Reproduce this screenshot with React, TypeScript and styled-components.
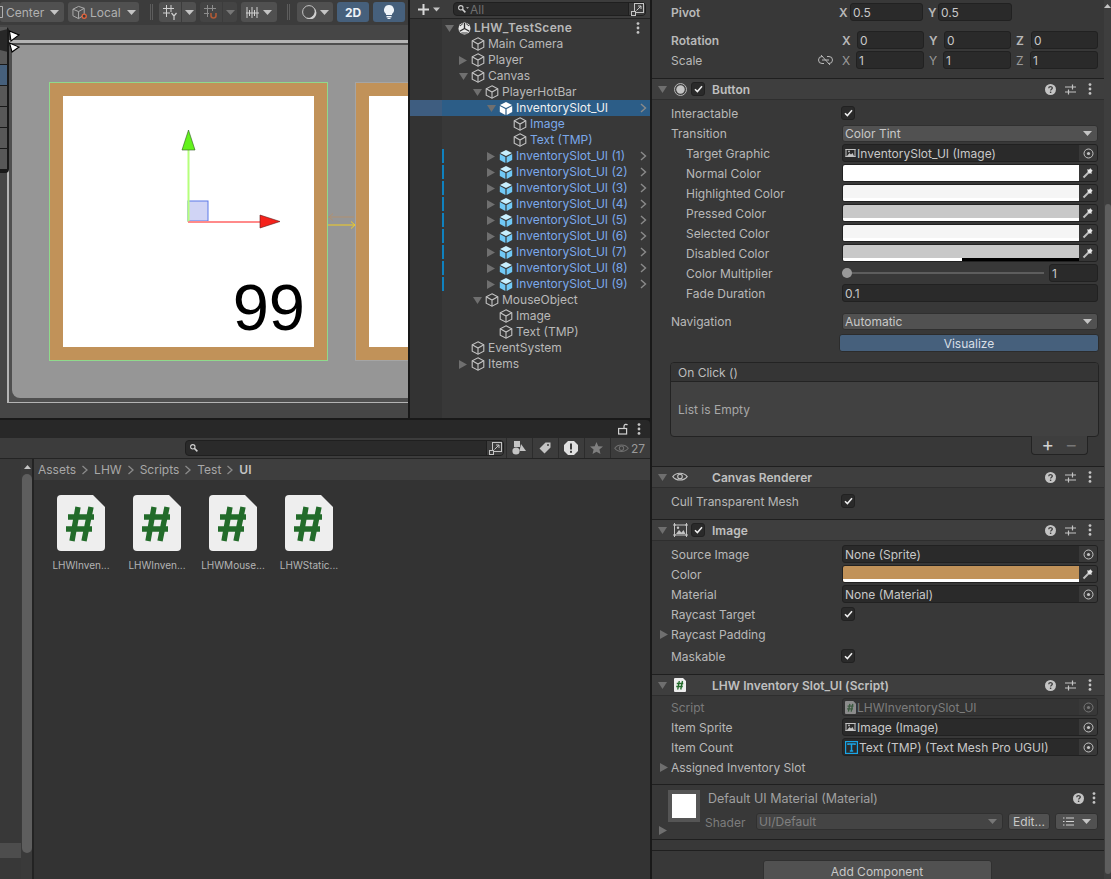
import React from 'react';
import styled, { createGlobalStyle } from 'styled-components';

const Global = createGlobalStyle`
  html, body { margin: 0; padding: 0; background: #191919; overflow: hidden; }
  #root { width: 1111px; height: 879px; }
  * { box-sizing: border-box; }
`;

const Root = styled.div`
  width: 1111px; height: 879px; display: flex; overflow: hidden;
  background: #191919; font-family: Inter, "Liberation Sans", sans-serif; font-size: 12px; color: #b8b8b8;
`;
const LeftColumn = styled.div`width: 650px; flex: none; display: flex; flex-direction: column;`;
const TopRow = styled.div`height: 418px; flex: none; display: flex;`;

/* ---------- Scene ---------- */
const Scene = styled.section`width: 408px; flex: none; display: flex; flex-direction: column; margin-right: 2px; overflow: hidden;`;
const SceneBar = styled.div`height: 25px; flex: none; background: #3c3c3c; display: flex; align-items: center; padding-bottom: 1px;`;
const ToolButton = styled.div<{ $w: number; $ml?: number; $blue?: boolean; $start?: number }>`
  width: ${p => p.$w}px; height: 20px; flex: none; margin-left: ${p => p.$ml ?? 4}px;
  display: flex; align-items: center; justify-content: ${p => (p.$start !== undefined ? 'flex-start' : 'center')}; gap: 3px;
  padding-left: ${p => p.$start ?? 0}px;
  background: ${p => (p.$blue ? '#46607c' : '#505050')}; border-radius: 3px; color: ${p => (p.$blue ? '#eef3f8' : '#b0b0b0')};
  font-size: 12px; font-weight: ${p => (p.$blue ? 700 : 400)};
`;
const CaretGap = styled.span<{ $w: number }>`margin-left: ${p => p.$w}px; display: flex; align-items: center;`;
const SplitPart = styled.div<{ $w: number; $dim?: boolean }>`
  width: ${p => p.$w}px; height: 20px; flex: none; display: flex; align-items: center; justify-content: center;
  background: ${p => (p.$dim ? '#444444' : '#505050')};
  margin-right: 1px; &:first-child { border-radius: 3px 0 0 3px; } &:last-child { border-radius: 0 3px 3px 0; margin-right: 0; }
`;
const Split = styled.div<{ $ml: number }>`display: flex; flex: none; margin-left: ${p => p.$ml}px;`;
const BarSep = styled.div<{ $ml: number }>`width: 3px; height: 16px; flex: none; margin-left: ${p => p.$ml}px; border-left: 1px solid #5d5d5d; border-right: 1px solid #5d5d5d;`;
const SceneArea = styled.div`flex: 1; position: relative; background: #464646; padding: 15px 0 15px 7px;`;
const Frame = styled.div`height: 363px; border-left: 2px solid #b4b4b4; border-top: 3px solid #b4b4b4; border-bottom: 1px solid #b4b4b4; background: #4f4f4f; padding: 2px 0 4px 3px;`;
const SceneCanvas = styled.div`position: relative; height: 100%; background: #969696; border-radius: 0 0 0 8px; overflow: hidden;`;
const Slot = styled.div<{ $left: number; $green?: boolean }>`
  position: absolute; left: ${p => p.$left}px; top: 37px; width: 279px; height: 279px;
  background: #c19259; border: 1px solid ${p => (p.$green ? '#8fd98c' : '#a5a5a5')}; padding: 13px; display: flex;
`;
const SlotInner = styled.div`flex: 1; background: #fff; display: flex; align-items: flex-end; justify-content: flex-end; padding: 0 9px 7px 0;`;
const Count = styled.span`font-family: "Liberation Sans", Arial, sans-serif; font-size: 65px; line-height: 64px; color: #000;`;
const GizmoSvg = styled.svg`position: absolute; left: 163px; top: 80px; width: 120px; height: 110px;`;
const LinkSvg = styled.svg`position: absolute; left: 316px; top: 167px; width: 28px; height: 18px;`;
const ToolOverlay = styled.div`position: absolute; left: -4px; top: 2px; width: 13px; height: 146px; background: #191919; border-radius: 0 4px 4px 0; padding: 0 2px 2px 0; display: flex; flex-direction: column; gap: 1px;`;
const ToolOverlayRow = styled.div<{ $active?: boolean; $h: number }>`height: ${p => p.$h}px; flex: none; background: ${p => (p.$active ? '#46607c' : '#585858')};`;
const CursorSvg = styled.svg`position: absolute; left: 0; top: 3px; width: 22px; height: 26px;`;

/* ---------- Hierarchy ---------- */
const Hierarchy = styled.section`width: 240px; flex: none; display: flex; flex-direction: column; overflow: hidden;`;
const HierBar = styled.div`height: 19px; flex: none; background: #3c3c3c; border-bottom: 1px solid #232323; display: flex; align-items: center; padding: 0 4px 0 7px;`;
const PlusWrap = styled.div`width: 36px; flex: none; display: flex; align-items: center; gap: 3px;`;
const SearchField = styled.div<{ $w?: number; $h?: number }>`
  flex: ${p => (p.$w ? 'none' : 1)}; width: ${p => (p.$w ? `${p.$w}px` : 'auto')}; height: ${p => p.$h ?? 14}px;
  background: #2a2a2a; border: 1px solid #1f1f1f; border-radius: 4px; display: flex; align-items: center; padding-left: 4px; color: #6f6f6f; font-size: 12px; gap: 1px;
`;
const SearchEnd = styled.div`margin-left: auto; width: 17px; height: 100%; background: #3c3c3c; border-left: 1px solid #1f1f1f; border-radius: 0 3px 3px 0; display: flex; align-items: center; justify-content: center;`;
const HierList = styled.div`flex: 1; padding-top: 1px; background: linear-gradient(90deg, #333333 32px, #383838 32px);`;
const HierRow = styled.div<{ $selected?: boolean }>`height: 16px; display: flex; align-items: center; background: ${p => (p.$selected ? '#2c5d87' : 'transparent')};`;
const RowGutter = styled.div<{ $selected?: boolean }>`width: 32px; height: 16px; flex: none; background: ${p => (p.$selected ? '#3e5d80' : 'transparent')};`;
const Mark = styled.div<{ $on?: boolean }>`width: 2px; height: 14px; flex: none; background: ${p => (p.$on ? '#0f81be' : 'transparent')};`;
const RowBody = styled.div<{ $depth: number }>`flex: 1; min-width: 0; height: 16px; display: flex; align-items: center; padding-left: ${p => p.$depth * 14}px; padding-right: 3px;`;
const ArrowSlot = styled.div`width: 10px; flex: none; display: flex; justify-content: center;`;
const NodeIcon = styled.div`width: 16px; margin: 0 2px; flex: none; display: flex; justify-content: center; align-items: center;`;
const NodeName = styled.span<{ $kind: string; $bold?: boolean }>`
  white-space: nowrap; line-height: 16px; font-weight: ${p => (p.$bold ? 600 : 400)}; letter-spacing: ${p => (p.$bold ? '.3px' : '0')};
  color: ${p => (p.$kind === 'selected' ? '#f0f0f0' : p.$kind === 'prefab' ? '#7ba8ea' : '#b8b8b8')};
`;
const RowEnd = styled.div<{ $pr?: number }>`margin-left: auto; margin-right: ${p => p.$pr ?? 0}px; width: 8px; flex: none; display: flex; justify-content: center;`;

/* ---------- Project ---------- */
const Project = styled.section`flex: 1; margin-top: 2px; display: flex; flex-direction: column; min-height: 0; overflow: hidden; border-radius: 0 4px 0 0;`;
const ProjectTabs = styled.div`height: 18px; flex: none; background: #282828; display: flex; align-items: center; justify-content: flex-end; gap: 9px; padding-right: 9px;`;
const ProjectBar = styled.div`height: 21px; flex: none; background: #3c3c3c; border-bottom: 1px solid #242424; display: flex; align-items: center; padding-left: 185px;`;
const FilterBtn = styled.div<{ $w: number; $first?: boolean }>`
  width: ${p => p.$w}px; height: 20px; flex: none; display: flex; align-items: center; justify-content: center; gap: 2px; padding-right: 2px;
  border-left: 1px solid #2c2c2c; color: #9a9a9a; font-size: 12px; margin-left: ${p => (p.$first ? 2 : 0)}px;
`;
const ProjectBody = styled.div`flex: 1; display: flex; min-height: 0; background: #333333;`;
const FolderPane = styled.div`width: 21px; flex: none; background: #383838; display: flex; flex-direction: column; justify-content: flex-end; padding-bottom: 21px;`;
const FolderSelected = styled.div`height: 15px; background: #4d4d4d;`;
const PaneScroll = styled.div`width: 13px; flex: none; background: #3a3a3a; border-right: 2px solid #232323; padding: 6px 0 0 1px; display: flex; flex-direction: column; align-items: center;`;
const PaneThumb = styled.div`width: 10px; height: 379px; margin-top: 5px; background: #5e5e5e; border-radius: 5px;`;
const AssetsPane = styled.div`flex: 1; display: flex; flex-direction: column; min-width: 0;`;
const Crumbs = styled.div`height: 21px; flex: none; background: #3e3e3e; display: flex; align-items: center; gap: 5px; padding-left: 4px; color: #a8a8a8;`;
const CrumbLast = styled.span`font-weight: 600; color: #c4c4c4;`;
const AssetGrid = styled.div`display: flex; padding: 15px 0 0 9px;`;
const Asset = styled.div`width: 76px; flex: none; display: flex; flex-direction: column; align-items: center;`;
const AssetLabel = styled.span`margin-top: 7px; font-size: 10px; line-height: 14px; color: #b4b4b4; white-space: nowrap;`;

/* ---------- Inspector ---------- */
const Inspector = styled.section`width: 459px; flex: none; margin-left: 2px; display: flex; background: #383838; overflow: hidden;`;
const InspectorContent = styled.div`width: 452px; flex: none; padding-top: 3px; display: flex; flex-direction: column;`;
const InspectorScroll = styled.div`width: 7px; flex: none; background: #3e3e3e; display: flex; flex-direction: column; align-items: center; padding-top: 4px;`;
const ScrollThumb = styled.div`width: 6px; height: 670px; margin-top: 196px; margin-left: 1px; background: #5e5e5e; border-radius: 3px;`;
const Row = styled.div<{ $mt?: number }>`height: 20px; flex: none; display: flex; align-items: center; padding: 0 6px 2px 19px; margin-top: ${p => p.$mt ?? 0}px;`;
const Label = styled.div<{ $indent?: boolean; $bold?: boolean; $dim?: boolean; $spread?: boolean }>`
  width: 171px; flex: none; display: flex; align-items: center; justify-content: ${p => (p.$spread ? 'space-between' : 'flex-start')};
  padding-left: ${p => (p.$indent ? 15 : 0)}px; padding-right: ${p => (p.$spread ? 9 : 0)}px; white-space: nowrap;
  font-weight: ${p => (p.$bold ? 600 : 400)}; color: ${p => (p.$dim ? '#7a7a7a' : '#b8b8b8')};
`;
const FoldArrow = styled.span`width: 11px; margin-left: -11px; flex: none; display: flex; align-items: center;`;
const Vec = styled.div<{ $w?: number; $ml?: number }>`flex: ${p => (p.$w ? 'none' : 1)}; width: ${p => (p.$w ? `${p.$w}px` : 'auto')}; margin-left: ${p => p.$ml ?? 0}px; display: flex; align-items: center; min-width: 0;`;
const VecRow = styled.div`flex: 1; display: flex; gap: 5px; min-width: 0;`;
const AxisLabel = styled.span<{ $w: number; $bold?: boolean; $dim?: boolean }>`
  width: ${p => p.$w}px; flex: none; text-align: left; font-weight: ${p => (p.$bold ? 600 : 400)}; color: ${p => (p.$dim ? '#9a9a9a' : '#b8b8b8')};
`;
const NumField = styled.div<{ $w?: number }>`
  flex: ${p => (p.$w ? 'none' : 1)}; width: ${p => (p.$w ? `${p.$w}px` : 'auto')}; min-width: 0; height: 18px; background: #2a2a2a; border: 1px solid #212121; border-radius: 3px;
  display: flex; align-items: center; padding-left: 2px; color: #c8c8c8;
`;
const CheckBox = styled.div`width: 14px; height: 14px; margin-left: -1px; flex: none; background: #2a2a2a; border: 1px solid #212121; border-radius: 3px; display: flex; align-items: center; justify-content: center;`;
const Dropdown = styled.div<{ $dim?: boolean; $w?: number }>`
  flex: ${p => (p.$w ? 'none' : 1)}; width: ${p => (p.$w ? `${p.$w}px` : 'auto')}; height: 17px; background: ${p => (p.$dim ? '#444444' : '#515151')};
  border: 1px solid #303030; border-radius: 3px; display: flex; align-items: center; justify-content: space-between;
  padding: 0 5px 0 2px; color: ${p => (p.$dim ? '#808080' : '#c8c8c8')};
`;
const ObjField = styled.div<{ $dim?: boolean }>`
  flex: 1; min-width: 0; height: 18px; background: ${p => (p.$dim ? '#343434' : '#2a2a2a')}; border: 1px solid ${p => (p.$dim ? '#2b2b2b' : '#212121')}; border-radius: 3px;
  display: flex; align-items: center; padding-left: 2px; gap: 1px; color: ${p => (p.$dim ? '#7c7c7c' : '#c8c8c8')}; white-space: nowrap; overflow: hidden;
`;
const ObjPicker = styled.div`margin-left: auto; width: 18px; height: 100%; flex: none; background: #383838; display: flex; align-items: center; justify-content: center;`;
const ColorField = styled.div`flex: 1; height: 18px; display: flex; background: #2a2a2a; border: 1px solid #212121; border-radius: 3px; overflow: hidden;`;
const ColorSwatch = styled.div<{ $c: string }>`flex: 1; background: ${p => p.$c}; display: flex; flex-direction: column; justify-content: flex-end;`;
const AlphaBar = styled.div<{ $half?: boolean }>`height: 3px; background: ${p => (p.$half ? 'linear-gradient(90deg, #fff 50.5%, #000 50.5%)' : '#fff')};`;
const Pipette = styled.div`width: 18px; flex: none; background: #363636; display: flex; align-items: center; justify-content: center;`;
const SliderWrap = styled.div`flex: 1; display: flex; align-items: center;`;
const SliderTrack = styled.div`width: 202px; height: 2px; flex: none; background: #5d5d5d; display: flex; align-items: center;`;
const SliderThumb = styled.div`width: 10px; height: 10px; flex: none; border-radius: 50%; background: #999999;`;
const VisualizeBtn = styled.div`height: 18px; width: 260px; flex: none; align-self: flex-end; margin: 2px 5px 0 0; background: #46607c; border: 1px solid #2c2c2c; border-radius: 3px; display: flex; align-items: center; justify-content: center; color: #d8dfe6;`;
const ListBox = styled.div`margin: 10px 5px 0 18px; height: 75px; flex: none; border: 1px solid #232323; border-radius: 4px; background: #414141; display: flex; flex-direction: column; overflow: hidden;`;
const ListHead = styled.div`height: 19px; flex: none; background: #353535; border-bottom: 1px solid #232323; display: flex; align-items: center; padding-left: 7px; color: #bdbdbd;`;
const ListEmpty = styled.div`flex: 1; display: flex; align-items: center; padding-left: 7px; color: #a8a8a8;`;
const ListTab = styled.div`align-self: flex-end; width: 57px; height: 19px; flex: none; margin: -1px 16px 11px 0; background: #3e3e3e; border: 1px solid #232323; border-top: none; border-radius: 0 0 4px 4px; display: flex; align-items: center; justify-content: space-around; padding: 0 4px; color: #d2d2d2; font-size: 19px; line-height: 18px;`;
const ListTabMinus = styled.span`color: #777777;`;
const Section = styled.div`flex: none; border-top: 1px solid #1f1f1f;`;
const SectionHead = styled.div`height: 21px; background: #3e3e3e; border-bottom: 1px solid #2e2e2e; display: flex; align-items: center; padding: 0 4px 0 6px;`;
const HeadIcon = styled.div`width: 20px; flex: none; margin: 0 2px 0 3px; display: flex; justify-content: center; align-items: center;`;
const HeadCheckSlot = styled.div`width: 14px; flex: none; margin-right: 6px; display: flex;`;
const HeadTitle = styled.div`font-weight: 600; color: #c0c0c0; white-space: nowrap; letter-spacing: .05px;`;
const HeadTools = styled.div`margin-left: auto; display: flex;`;
const HeadTool = styled.div`width: 20px; flex: none; display: flex; align-items: center; justify-content: center;`;
const SectionBody = styled.div<{ $pt: number; $pb: number }>`display: flex; flex-direction: column; padding: ${p => p.$pt}px 0 ${p => p.$pb}px;`;
const MaterialBlock = styled.div`height: 56px; flex: none; border-top: 1px solid #1f1f1f; border-bottom: 1px solid #1f1f1f; display: grid; grid-template-columns: 48px 1fr; padding: 5px 5px 0 7px;`;
const MatLeft = styled.div`position: relative; display: flex; flex-direction: column;`;
const MatSwatch = styled.div`width: 32px; height: 32px; margin-left: 9px; background: #555555; padding: 4px; display: flex;`;
const MatSwatchInner = styled.div`flex: 1; background: #fff;`;
const MatArrow = styled.div`margin-top: 1px; margin-left: 0;`;
const MatRight = styled.div`display: flex; flex-direction: column;`;
const MatTop = styled.div`height: 16px; display: flex; align-items: center; color: #a0a0a0; font-size: 12.5px; padding-left: 1px;`;
const MatTools = styled.div`margin-left: auto; display: flex; align-items: center; gap: 8px; padding-right: 3px;`;
const MatBottom = styled.div`margin-top: 7px; display: flex; align-items: center; height: 17px;`;
const ShaderLabel = styled.span`width: 51px; flex: none; color: #7d7d7d; margin-left: -2px; padding-top: 1px;`;
const SmallBtn = styled.div<{ $w: number; $ml: number }>`width: ${p => p.$w}px; margin-left: ${p => p.$ml}px; height: 17px; flex: none; background: #515151; border: 1px solid #303030; border-radius: 3px; display: flex; align-items: center; justify-content: center; gap: 8px; color: #c8c8c8;`;
const Spacer = styled.div<{ $h: number }>`height: ${p => p.$h}px; flex: none;`;
const BottomLine = styled.div`height: 1px; flex: none; background: #1f1f1f; margin-top: 10px;`;
const AddRow = styled.div`flex: none; display: flex; justify-content: center; padding: 9px 2px 0 0;`;
const AddBtn = styled.div`width: 229px; height: 26px; background: #515151; border: 1px solid #303030; border-radius: 3px; display: flex; justify-content: center; padding-top: 3px; color: #c8c8c8;`;

/* ---------- Icons ---------- */
const Caret = ({ c = '#c4c4c4', w = 9 }: { c?: string; w?: number }) => (
  <svg width={w} height={5} viewBox="0 0 9 5"><path d="M0 0H9L4.5 5Z" fill={c} /></svg>
);
const TriDown = () => <svg width="9" height="8" viewBox="0 0 9 8"><path d="M0 1H9L4.5 8Z" fill="#6f6f6f" /></svg>;
const TriRight = ({ c = '#6f6f6f' }: { c?: string }) => <svg width="8" height="9" viewBox="0 0 8 9"><path d="M0 0L8 4.5L0 9Z" fill={c} /></svg>;
const Chevron = () => <svg width="7" height="10" viewBox="0 0 7 10"><path d="M1 1L5.5 5L1 9" fill="none" stroke="#8a8a8a" strokeWidth="1.4" /></svg>;
const CubeOutline = ({ s = 14 }: { s?: number }) => (
  <svg width={s} height={s} viewBox="0 0 14 14" fill="none" stroke="#c4c4c4" strokeWidth="1.1">
    <path d="M7 .8L12.8 3.8V10.2L7 13.2L1.2 10.2V3.8Z" /><path d="M1.2 3.8L7 7L12.8 3.8M7 7V13.2" />
  </svg>
);
const CubeSolid = ({ sel }: { sel?: boolean }) => (
  <svg width="14" height="15" viewBox="0 0 14 14">
    <path d="M7 .5L13 3.6L7 6.6L1 3.6Z" fill={sel ? '#ffffff' : '#c8effe'} />
    <path d="M.8 4.6L6.4 7.5V13.6L.8 10.6Z" fill={sel ? '#ffffff' : '#71c9f6'} />
    <path d="M13.2 4.6L7.6 7.5V13.6L13.2 10.6Z" fill={sel ? '#ffffff' : '#71c9f6'} />
  </svg>
);
const UnityMark = () => (
  <svg width="13" height="13" viewBox="0 0 13 13">
    <circle cx="6.5" cy="6.5" r="6" fill="#e6e6e6" />
    <path d="M6.5 6.5V1M6.5 6.5L1.7 9.3M6.5 6.5L11.3 9.3" stroke="#2b2b2b" strokeWidth="1.3" />
    <path d="M2 4L5 1.5M8 1.5L11 4M3.3 11L9.7 11" stroke="#2b2b2b" strokeWidth=".9" />
  </svg>
);
const Magnifier = ({ caret }: { caret?: boolean }) => (
  <svg width={caret ? 11 : 8} height="8" viewBox={caret ? '0 0 11 8' : '0 0 8 8'} fill="none" stroke="#cfcfcf" strokeWidth="1.1">
    <circle cx="2.8" cy="2.8" r="2.2" /><path d="M4.400 4.400L7.400 7.400" strokeWidth="1.5" />
    {caret && <path d="M8 2H11L9.500 4Z" fill="#9a9a9a" stroke="none" />}
  </svg>
);
const OpenFull = () => (
  <svg width="13" height="13" viewBox="0 0 13 13" fill="none" stroke="#c4c4c4" strokeWidth="1">
    <rect x="3.5" y=".5" width="9" height="9" /><rect x=".5" y="8.5" width="4" height="4" fill="#3c3c3c" /><path d="M5.5 7.5L10 3M7 3H10V6" />
  </svg>
);
const Dots = ({ c = '#c4c4c4' }: { c?: string }) => (
  <svg width="4" height="12" viewBox="0 0 4 12" fill={c}><circle cx="2" cy="1.6" r="1.4" /><circle cx="2" cy="6" r="1.4" /><circle cx="2" cy="10.4" r="1.4" /></svg>
);
const Help = () => (
  <svg width="11" height="11" viewBox="0 0 11 11">
    <circle cx="5.5" cy="5.5" r="5.5" fill="#c4c4c4" />
    <path d="M3.7 4.2C3.8 2.2 7.3 2.2 7.3 4.1C7.3 5.3 5.6 5.3 5.6 6.6" fill="none" stroke="#3e3e3e" strokeWidth="1.3" />
    <rect x="4.9" y="7.6" width="1.4" height="1.4" fill="#3e3e3e" />
  </svg>
);
const Presets = () => (
  <svg width="11" height="11" viewBox="0 0 11 11" stroke="#c4c4c4" strokeWidth="1.2" fill="none">
    <path d="M0 3H11M0 8H11M7.5 .5V5.5M3.5 5.5V10.5" />
  </svg>
);
const Tick = () => <svg width="9" height="8" viewBox="0 0 9 8"><path d="M1 4.2L3.4 6.6L8 1.2" fill="none" stroke="#f0f0f0" strokeWidth="1.5" /></svg>;
const Target = ({ dim }: { dim?: boolean }) => (
  <svg width="11" height="11" viewBox="0 0 11 11" fill="none" stroke={dim ? '#777777' : '#c4c4c4'}><circle cx="5.5" cy="5.5" r="4.5" /><circle cx="5.5" cy="5.5" r="1.6" fill={dim ? '#777777' : '#c4c4c4'} stroke="none" /></svg>
);
const Dropper = () => (
  <svg width="12" height="12" viewBox="0 0 12 12" fill="none">
    <path d="M1.500 10.500L7 5" stroke="#bfbfbf" strokeWidth="2" />
    <path d="M6.500 5.500L9.500 2.500" stroke="#e8e8e8" strokeWidth="3.200" />
    <path d="M5.500 2.500L9.500 6.500" stroke="#e8e8e8" strokeWidth="1.200" />
  </svg>
);
const ImageGlyph = ({ c = '#c4c4c4' }: { c?: string }) => (
  <svg width="11" height="10" viewBox="0 0 11 10" fill="none" stroke={c}><rect x="1" y="1.5" width="9" height="7" /><path d="M.5 1.5H2M9 1.5H10.5M.5 8.5H2M9 8.5H10.5" /><path d="M2 8L4.5 5L6 6.5L7.5 5L9 8Z" fill={c} stroke="none" /><circle cx="4" cy="3.4" r=".9" fill={c} stroke="none" /></svg>
);
const ImageHeadIcon = () => (
  <svg width="15" height="14" viewBox="0 0 15 14" fill="none" stroke="#c4c4c4"><rect x="1.5" y="2" width="12" height="10" /><path d="M0 2H3M12 2H15M0 12H3M12 12H15M1.5 0V3M13.5 0V3M1.5 11V14M13.5 11V14" /><path d="M3 11L6 7L8.5 9.5L10.5 7L12.5 11Z" fill="#c4c4c4" stroke="none" /><circle cx="5" cy="4.8" r="1.2" fill="#c4c4c4" stroke="none" /></svg>
);
const ButtonHeadIcon = () => (
  <svg width="13" height="13" viewBox="0 0 13 13"><circle cx="6.5" cy="6.5" r="6" fill="none" stroke="#b4b4b4" /><circle cx="6.5" cy="6.5" r="4.2" fill="#c4c4c4" /></svg>
);
const EyeIcon = ({ c = '#c4c4c4', s = 16 }: { c?: string; s?: number }) => (
  <svg width={s} height={s * 0.7} viewBox="0 0 16 11" fill="none" stroke={c} strokeWidth="1.1"><path d="M.8 5.5C4 1 12 1 15.2 5.5C12 10 4 10 .8 5.5Z" /><circle cx="8" cy="5.5" r="2.3" /></svg>
);
const ScriptIcon = ({ w, h }: { w: number; h: number }) => (
  <svg width={w} height={h} viewBox="0 0 48 56">
    <path d="M4 0H36L48 12V52Q48 56 44 56H4Q0 56 0 52V4Q0 0 4 0Z" fill="#eeeeee" />
    <path d="M21 12L15 46M34 12L27 46M11 22H37M9 34H35" stroke="#226b2a" strokeWidth="5.4" fill="none" />
  </svg>
);
const TmpIcon = () => (
  <svg width="13" height="13" viewBox="0 0 13 13" fill="none" stroke="#19a5e6" strokeWidth="1.2">
    <rect x=".6" y=".6" width="11.8" height="11.8" /><path d="M3 4V3H10V4M6.5 3V10M4.8 10H8.2" strokeWidth="1.5" />
  </svg>
);
const LinkBroken = () => (
  <svg width="15" height="10" viewBox="0 0 15 10" fill="none" stroke="#b8b8b8" strokeWidth="1"><path d="M5 1.5H4A3.5 3.5 0 0 0 4 8.5H6M9 1.5H11A3.5 3.5 0 0 1 11 8.5H10" /><path d="M4 5H11M3 0L12 10" /></svg>
);

const HotbarNames = [1, 2, 3, 4, 5, 6, 7, 8, 9];
type Node = { name: string; depth: number; arrow?: 'down' | 'right'; icon: 'plain' | 'solid' | 'scene'; kind: string; mark?: boolean; chevron?: boolean; selected?: boolean; bold?: boolean };
const nodes: Node[] = [
  { name: 'LHW_TestScene', depth: 0, arrow: 'down', icon: 'scene', kind: 'plain', bold: true },
  { name: 'Main Camera', depth: 1, icon: 'plain', kind: 'plain' },
  { name: 'Player', depth: 1, arrow: 'right', icon: 'plain', kind: 'plain' },
  { name: 'Canvas', depth: 1, arrow: 'down', icon: 'plain', kind: 'plain' },
  { name: 'PlayerHotBar', depth: 2, arrow: 'down', icon: 'plain', kind: 'plain' },
  { name: 'InventorySlot_UI', depth: 3, arrow: 'down', icon: 'solid', kind: 'selected', chevron: true, selected: true },
  { name: 'Image', depth: 4, icon: 'plain', kind: 'prefab' },
  { name: 'Text (TMP)', depth: 4, icon: 'plain', kind: 'prefab' },
  ...HotbarNames.map(n => ({ name: `InventorySlot_UI (${n})`, depth: 3, arrow: 'right' as const, icon: 'solid' as const, kind: 'prefab', mark: true, chevron: true })),
  { name: 'MouseObject', depth: 2, arrow: 'down', icon: 'plain', kind: 'plain' },
  { name: 'Image', depth: 3, icon: 'plain', kind: 'plain' },
  { name: 'Text (TMP)', depth: 3, icon: 'plain', kind: 'plain' },
  { name: 'EventSystem', depth: 1, icon: 'plain', kind: 'plain' },
  { name: 'Items', depth: 1, arrow: 'right', icon: 'plain', kind: 'plain' },
];

const Check = () => <CheckBox><Tick /></CheckBox>;

const SectionHeader = ({ icon, title, check }: { icon: React.ReactNode; title: string; check?: boolean }) => (
  <SectionHead>
    <TriDown />
    <HeadIcon>{icon}</HeadIcon>
    <HeadCheckSlot>{check && <Check />}</HeadCheckSlot>
    <HeadTitle>{title}</HeadTitle>
    <HeadTools>
      <HeadTool><Help /></HeadTool>
      <HeadTool><Presets /></HeadTool>
      <HeadTool><Dots /></HeadTool>
    </HeadTools>
  </SectionHead>
);

const ObjectRow = ({ label, value, icon, dim, indent }: { label: string; value: string; icon?: React.ReactNode; dim?: boolean; indent?: boolean }) => (
  <Row>
    <Label $indent={indent} $dim={dim}>{label}</Label>
    <ObjField $dim={dim}>{icon}<span>{value}</span><ObjPicker><Target dim={dim} /></ObjPicker></ObjField>
  </Row>
);

const ColorRow = ({ label, color, half, indent }: { label: string; color: string; half?: boolean; indent?: boolean }) => (
  <Row>
    <Label $indent={indent}>{label}</Label>
    <ColorField>
      <ColorSwatch $c={color}><AlphaBar $half={half} /></ColorSwatch>
      <Pipette><Dropper /></Pipette>
    </ColorField>
  </Row>
);

const CrumbChevron = () => (
  <svg width="8" height="10" viewBox="0 0 8 10"><path d="M1.500 1L6 5L1.500 9" fill="none" stroke="#8a8a8a" strokeWidth="1.3" /></svg>
);
const ScriptIconDim = () => (
  <svg width="11" height="13" viewBox="0 0 48 56"><path d="M4 0H36L48 12V52Q48 56 44 56H4Q0 56 0 52V4Q0 0 4 0Z" fill="#8c8c8c" /><path d="M21 12L15 46M34 12L27 46M11 22H37M9 34H35" stroke="#3c5a40" strokeWidth="6" fill="none" /></svg>
);

export default function App() {
  return (
    <Root>
      <Global />
      <LeftColumn>
        <TopRow>
          <Scene>
            <SceneBar>
              <ToolButton $w={64} $ml={0} $start={0}>
                <svg width="3" height="12" viewBox="0 0 3 12" fill="none" stroke="#b0b0b0"><path d="M0 .5H2.500V11.500H0" /></svg>
                <span>Center</span><CaretGap $w={3}><Caret /></CaretGap>
              </ToolButton>
              <ToolButton $w={71} $start={4}>
                <svg width="15" height="15" viewBox="0 0 16 15" fill="none" stroke="#b0b0b0"><path d="M7 1L13 3V10L7 14L1 11V4Z" /><path d="M1 4L7 6.5L13 3M7 6.5V14" /><circle cx="13" cy="11.5" r="2.2" fill="#3c3c3c" stroke="#e2623a" strokeWidth="1.4" /></svg>
                <span>Local</span><CaretGap $w={3}><Caret /></CaretGap>
              </ToolButton>
              <BarSep $ml={11} />
              <Split $ml={6}>
                <SplitPart $w={22}><svg width="14" height="15" viewBox="0 0 14 15" fill="none" stroke="#d0d0d0"><path d="M3.5 0V12M8 0V7M0 3.5H11M0 8H7" /><path d="M8.5 8L11 11L13.5 8M11 11V15" strokeWidth="1.2" /></svg></SplitPart>
                <SplitPart $w={14}><Caret /></SplitPart>
              </Split>
              <Split $ml={4}>
                <SplitPart $w={22} $dim><svg width="14" height="14" viewBox="0 0 14 14" fill="none"><path d="M3.500 0V12M8.500 0V6M0 3.500H12M0 8.500H5" stroke="#8c8c8c" /><path d="M7 8V10.5A2.5 2.5 0 0 0 12 10.5V8" stroke="#b05a36" strokeWidth="1.6" /></svg></SplitPart>
                <SplitPart $w={14} $dim><Caret c="#777777" /></SplitPart>
              </Split>
              <ToolButton $w={36}>
                <svg width="14" height="13" viewBox="0 0 14 13" fill="none" stroke="#d0d0d0"><path d="M1 1V12M3.5 4V10M6 1V12M8.5 4V10M11 1V12M0 7H13" /></svg>
                <Caret />
              </ToolButton>
              <BarSep $ml={10} />
              <ToolButton $w={36} $ml={7}>
                <svg width="15" height="14" viewBox="0 0 15 14"><circle cx="7" cy="7" r="6.4" fill="#4a4a4a" stroke="#c4c4c4" /><path d="M12 3A6 6 0 0 1 4 13A7 7 0 0 0 12 3Z" fill="#d0d0d0" /></svg>
                <Caret />
              </ToolButton>
              <ToolButton $w={32} $blue>2D</ToolButton>
              <ToolButton $w={32} $blue>
                <svg width="10" height="14" viewBox="0 0 10 14" fill="#eef3f8"><path d="M5 0A5 5 0 0 1 8 9V10H2V9A5 5 0 0 1 5 0Z" /><rect x="2.5" y="11" width="5" height="1.4" /><rect x="3.5" y="12.8" width="3" height="1.2" /></svg>
              </ToolButton>
            </SceneBar>
            <SceneArea>
              <Frame>
                <SceneCanvas>
                  <Slot $left={37} $green>
                    <SlotInner><Count>99</Count></SlotInner>
                  </Slot>
                  <Slot $left={343}>
                    <SlotInner />
                  </Slot>
                  <LinkSvg viewBox="0 0 28 18" fill="none">
                    <path d="M0 5H26M5 1.5L1 5L5 8.5" stroke="#b09070" strokeWidth="1" />
                    <path d="M0 13H27M23 9.5L27 13L23 16.5" stroke="#f2cd22" strokeWidth="1" />
                  </LinkSvg>
                  <GizmoSvg viewBox="175 125 120 110">
                    <rect x="188" y="201" width="20" height="20" fill="#d0d4f5" stroke="#5b78e8" strokeWidth="1" />
                    <rect x="187.5" y="148" width="2" height="74" fill="#b6ff7c" />
                    <rect x="188" y="221" width="74" height="2" fill="#ff8a8a" />
                    <path d="M188.500 130L182 150H195Z" fill="#63f21c" stroke="#2f5a22" strokeWidth=".6" />
                    <path d="M280 221.500L260 215V228Z" fill="#f5221b" stroke="#5e1a18" strokeWidth=".6" />
                  </GizmoSvg>
                </SceneCanvas>
              </Frame>
              <ToolOverlay>
                <ToolOverlayRow $h={37} />
                <ToolOverlayRow $h={20} $active />
                <ToolOverlayRow $h={20} />
                <ToolOverlayRow $h={20} />
                <ToolOverlayRow $h={20} />
                <ToolOverlayRow $h={20} />
              </ToolOverlay>
              <CursorSvg viewBox="0 0 22 26">
                <path d="M0 3L8 1L7 8L9 13L7 18L8 24L0 22Z" fill="#1c1c1c" opacity=".8" />
                <path d="M9.500 3L19 7L11 13Z" fill="#fff" stroke="#000" strokeWidth="1.100" />
                <path d="M9.500 15L19 19L12 24Z" fill="#fff" stroke="#000" strokeWidth="1.100" />
              </CursorSvg>
            </SceneArea>
          </Scene>
          <Hierarchy>
            <HierBar>
              <PlusWrap>
                <svg width="13" height="13" viewBox="0 0 13 13"><path d="M6.5 1V12M1 6.500H12" stroke="#d8d8d8" strokeWidth="2" /></svg>
                <Caret w={7} />
              </PlusWrap>
              <SearchField>
                <Magnifier caret />
                <span>All</span>
                <SearchEnd><OpenFull /></SearchEnd>
              </SearchField>
            </HierBar>
            <HierList>
              {nodes.map((n, i) => (
                <HierRow key={i} $selected={n.selected}>
                  <RowGutter $selected={n.selected} />
                  <Mark $on={n.mark} />
                  <RowBody $depth={n.depth}>
                    <ArrowSlot>{n.arrow === 'down' ? <TriDown /> : n.arrow === 'right' ? <TriRight /> : null}</ArrowSlot>
                    <NodeIcon>
                      {n.icon === 'scene' ? <UnityMark /> : n.icon === 'solid' ? <CubeSolid sel={n.selected} /> : <CubeOutline />}
                    </NodeIcon>
                    <NodeName $kind={n.kind} $bold={n.bold}>{n.name}</NodeName>
                    {n.chevron && <RowEnd><Chevron /></RowEnd>}
                    {n.bold && <RowEnd $pr={5}><Dots /></RowEnd>}
                  </RowBody>
                </HierRow>
              ))}
            </HierList>
          </Hierarchy>
        </TopRow>
        <Project>
          <ProjectTabs>
            <svg width="10" height="12" viewBox="0 0 10 12" fill="none" stroke="#d0d0d0" strokeWidth="1.2"><rect x=".6" y="5.500" width="8" height="5.500" /><path d="M6 5.500V3A2 2 0 0 1 9.500 2" /></svg>
            <Dots />
          </ProjectTabs>
          <ProjectBar>
            <SearchField $w={319} $h={16}>
              <Magnifier />
              <SearchEnd><OpenFull /></SearchEnd>
            </SearchField>
            <FilterBtn $w={26} $first>
              <svg width="14" height="14" viewBox="0 0 14 14" fill="#c4c4c4"><rect x="2" y="0" width="6" height="6" /><circle cx="4" cy="10" r="3.6" /><path d="M9 3L14 10H7.500Z" /></svg>
            </FilterBtn>
            <FilterBtn $w={26}>
              <svg width="12" height="12" viewBox="0 0 12 12"><path d="M6.500 0.500H11.500V5.500L5.500 11.500L.5 6.500Z" fill="#c4c4c4" /><circle cx="9" cy="3" r="1" fill="#3c3c3c" /></svg>
            </FilterBtn>
            <FilterBtn $w={26}>
              <svg width="14" height="14" viewBox="0 0 14 14"><path d="M4 0H10L14 4V10L10 14H4L0 10V4Z" fill="#e0e0e0" /><rect x="6" y="2.500" width="2" height="6" fill="#3c3c3c" /><rect x="6" y="9.800" width="2" height="2" fill="#3c3c3c" /></svg>
            </FilterBtn>
            <FilterBtn $w={26}>
              <svg width="13" height="12" viewBox="0 0 13 12"><path d="M6.500 0L8.300 4.200L13 4.600L9.400 7.600L10.500 12L6.500 9.700L2.500 12L3.600 7.600L0 4.600L4.700 4.200Z" fill="#7f7f7f" /></svg>
            </FilterBtn>
            <FilterBtn $w={40}>
              <EyeIcon c="#6f6f6f" s={15} />
              <span>27</span>
            </FilterBtn>
          </ProjectBar>
          <ProjectBody>
            <FolderPane><FolderSelected /></FolderPane>
            <PaneScroll>
              <svg width="7" height="4" viewBox="0 0 7 4"><path d="M0 4L3.500 0L7 4Z" fill="#c4c4c4" /></svg>
              <PaneThumb />
            </PaneScroll>
            <AssetsPane>
              <Crumbs>
                <span>Assets</span><CrumbChevron />
                <span>LHW</span><CrumbChevron />
                <span>Scripts</span><CrumbChevron />
                <span>Test</span><CrumbChevron />
                <CrumbLast>UI</CrumbLast>
              </Crumbs>
              <AssetGrid>
                {['LHWInven...', 'LHWInven...', 'LHWMouse...', 'LHWStatic...'].map((l, i) => (
                  <Asset key={i}>
                    <ScriptIcon w={48} h={56} />
                    <AssetLabel>{l}</AssetLabel>
                  </Asset>
                ))}
              </AssetGrid>
            </AssetsPane>
          </ProjectBody>
        </Project>
      </LeftColumn>
      <Inspector>
        <InspectorContent>
          <Row>
            <Label $bold>Pivot</Label>
            <VecRow>
              <Vec $w={84} $ml={-3}><AxisLabel $w={11} $bold>X</AxisLabel><NumField>0.5</NumField></Vec>
              <Vec $w={84}><AxisLabel $w={10} $bold>Y</AxisLabel><NumField>0.5</NumField></Vec>
            </VecRow>
          </Row>
          <Row $mt={8}>
            <Label $bold>Rotation</Label>
            <VecRow>
              {['X', 'Y', 'Z'].map(a => <Vec key={a}><AxisLabel $w={15} $bold>{a}</AxisLabel><NumField>0</NumField></Vec>)}
            </VecRow>
          </Row>
          <Row>
            <Label $spread>Scale<LinkBroken /></Label>
            <VecRow>
              {['X', 'Y', 'Z'].map(a => <Vec key={a}><AxisLabel $w={14} $dim>{a}</AxisLabel><NumField>1</NumField></Vec>)}
            </VecRow>
          </Row>
          <Spacer $h={7} />
          <Section>
            <SectionHeader icon={<ButtonHeadIcon />} title="Button" check />
            <SectionBody $pt={4} $pb={0}>
              <Row><Label>Interactable</Label><Check /></Row>
              <Row><Label>Transition</Label><Dropdown>Color Tint<Caret /></Dropdown></Row>
              <ObjectRow label="Target Graphic" value="InventorySlot_UI (Image)" icon={<ImageGlyph />} indent />
              <ColorRow label="Normal Color" color="#ffffff" indent />
              <ColorRow label="Highlighted Color" color="#f5f5f5" indent />
              <ColorRow label="Pressed Color" color="#c8c8c8" indent />
              <ColorRow label="Selected Color" color="#f5f5f5" indent />
              <ColorRow label="Disabled Color" color="#c8c8c8" half indent />
              <Row>
                <Label $indent>Color Multiplier</Label>
                <SliderWrap><SliderTrack><SliderThumb /></SliderTrack></SliderWrap>
                <NumField $w={49}>1</NumField>
              </Row>
              <Row><Label $indent>Fade Duration</Label><NumField>0.1</NumField></Row>
              <Row $mt={8}><Label>Navigation</Label><Dropdown>Automatic<Caret /></Dropdown></Row>
              <VisualizeBtn>Visualize</VisualizeBtn>
              <ListBox>
                <ListHead>On Click ()</ListHead>
                <ListEmpty>List is Empty</ListEmpty>
              </ListBox>
              <ListTab><span>+</span><ListTabMinus>−</ListTabMinus></ListTab>
            </SectionBody>
          </Section>
          <Section>
            <SectionHeader icon={<EyeIcon />} title="Canvas Renderer" />
            <SectionBody $pt={4} $pb={7}>
              <Row><Label>Cull Transparent Mesh</Label><Check /></Row>
            </SectionBody>
          </Section>
          <Section>
            <SectionHeader icon={<ImageHeadIcon />} title="Image" check />
            <SectionBody $pt={4} $pb={7}>
              <ObjectRow label="Source Image" value="None (Sprite)" />
              <ColorRow label="Color" color="#c19259" />
              <ObjectRow label="Material" value="None (Material)" />
              <Row><Label>Raycast Target</Label><Check /></Row>
              <Row><Label><FoldArrow><TriRight /></FoldArrow>Raycast Padding</Label></Row>
              <Row $mt={2}><Label>Maskable</Label><Check /></Row>
            </SectionBody>
          </Section>
          <Section>
            <SectionHeader icon={<ScriptIcon w={12} h={14} />} title="LHW Inventory Slot_UI (Script)" />
            <SectionBody $pt={2} $pb={6}>
              <ObjectRow label="Script" value="LHWInventorySlot_UI" icon={<ScriptIconDim />} dim />
              <ObjectRow label="Item Sprite" value="Image (Image)" icon={<ImageGlyph />} />
              <ObjectRow label="Item Count" value="Text (TMP) (Text Mesh Pro UGUI)" icon={<TmpIcon />} />
              <Row><Label><FoldArrow><TriRight /></FoldArrow>Assigned Inventory Slot</Label></Row>
            </SectionBody>
          </Section>
          <MaterialBlock>
            <MatLeft>
              <MatSwatch><MatSwatchInner /></MatSwatch>
              <MatArrow><TriRight /></MatArrow>
            </MatLeft>
            <MatRight>
              <MatTop>
                <span>Default UI Material (Material)</span>
                <MatTools><Help /><Dots /></MatTools>
              </MatTop>
              <MatBottom>
                <ShaderLabel>Shader</ShaderLabel>
                <Dropdown $dim $w={247}>UI/Default<Caret c="#777777" /></Dropdown>
                <SmallBtn $w={42} $ml={5}>Edit...</SmallBtn>
                <SmallBtn $w={43} $ml={5}>
                  <svg width="11" height="9" viewBox="0 0 11 9" stroke="#d2d2d2"><path d="M3 1H11M3 4.500H11M3 8H11M0 1H1.500M0 4.500H1.500M0 8H1.500" /></svg>
                  <Caret />
                </SmallBtn>
              </MatBottom>
            </MatRight>
          </MaterialBlock>
          <BottomLine />
          <AddRow><AddBtn>Add Component</AddBtn></AddRow>
        </InspectorContent>
        <InspectorScroll>
          <svg width="7" height="4" viewBox="0 0 7 4"><path d="M0 4L3.500 0L7 4Z" fill="#c4c4c4" /></svg>
          <ScrollThumb />
        </InspectorScroll>
      </Inspector>
    </Root>
  );
}
